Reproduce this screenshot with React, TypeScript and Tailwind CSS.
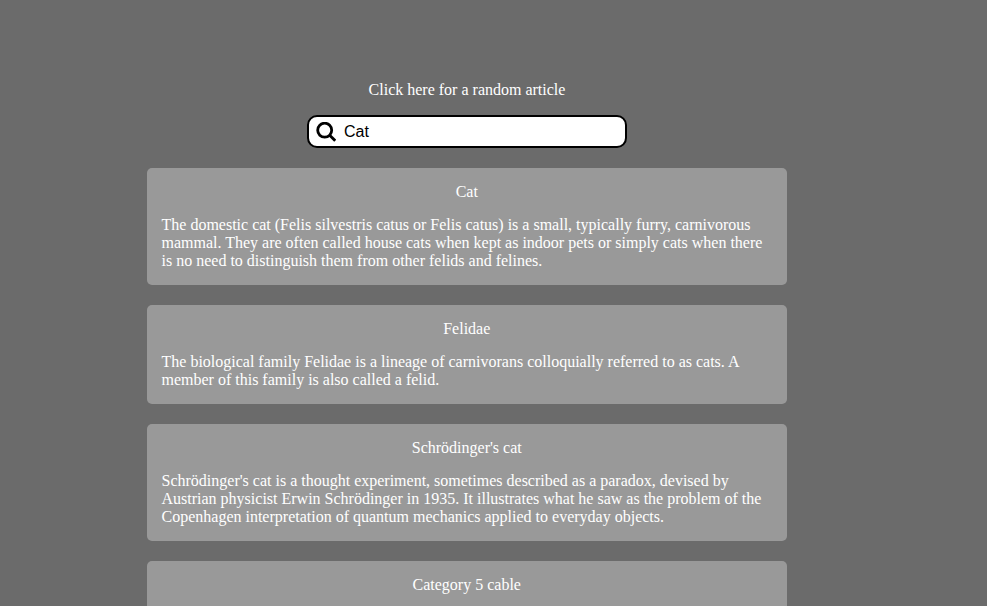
import React from "react";

const articles = [
  {
    title: "Cat",
    text: "The domestic cat (Felis silvestris catus or Felis catus) is a small, typically furry, carnivorous mammal. They are often called house cats when kept as indoor pets or simply cats when there is no need to distinguish them from other felids and felines.",
  },
  {
    title: "Felidae",
    text: "The biological family Felidae is a lineage of carnivorans colloquially referred to as cats. A member of this family is also called a felid.",
  },
  {
    title: "Schrödinger's cat",
    text: "Schrödinger's cat is a thought experiment, sometimes described as a paradox, devised by Austrian physicist Erwin Schrödinger in 1935. It illustrates what he saw as the problem of the Copenhagen interpretation of quantum mechanics applied to everyday objects.",
  },
  { title: "Category 5 cable", text: "" },
];

function SearchIcon() {
  return (
    <svg viewBox="0 0 20 20" className="h-5 w-5 shrink-0" fill="none" stroke="black">
      <circle cx="8.700" cy="8.200" r="7" strokeWidth="2.800" />
      <path d="M13.200 12.800l6 6" strokeWidth="2.800" />
    </svg>
  );
}

export default function App() {
  return (
    <main className="flex h-[606px] flex-col overflow-hidden bg-[#6b6b6b] pl-[147px] pt-[81px] font-['Liberation_Serif',serif] text-base leading-[18px] text-white">
      <div className="flex w-[640px] shrink-0 flex-col items-center">
        <a className="cursor-pointer">Click here for a random article</a>
        <label className="mt-4 flex h-[33px] w-80 items-center gap-2 rounded-[10px] border-2 border-black bg-white pl-[7px]">
          <SearchIcon />
          <input
            defaultValue="Cat"
            className="w-64 bg-transparent font-['Liberation_Sans',sans-serif] text-base text-black outline-none"
          />
        </label>
        <div className="mt-5 flex w-full flex-col gap-5">
          {articles.map((article) => (
            <article key={article.title} className="rounded-[5px] bg-[#999999] py-[15px] pl-[14.5px] pr-[15px]">
              <h2 className="text-center">{article.title}</h2>
              <p className="mt-[15px]">{article.text}</p>
            </article>
          ))}
        </div>
      </div>
    </main>
  );
}
